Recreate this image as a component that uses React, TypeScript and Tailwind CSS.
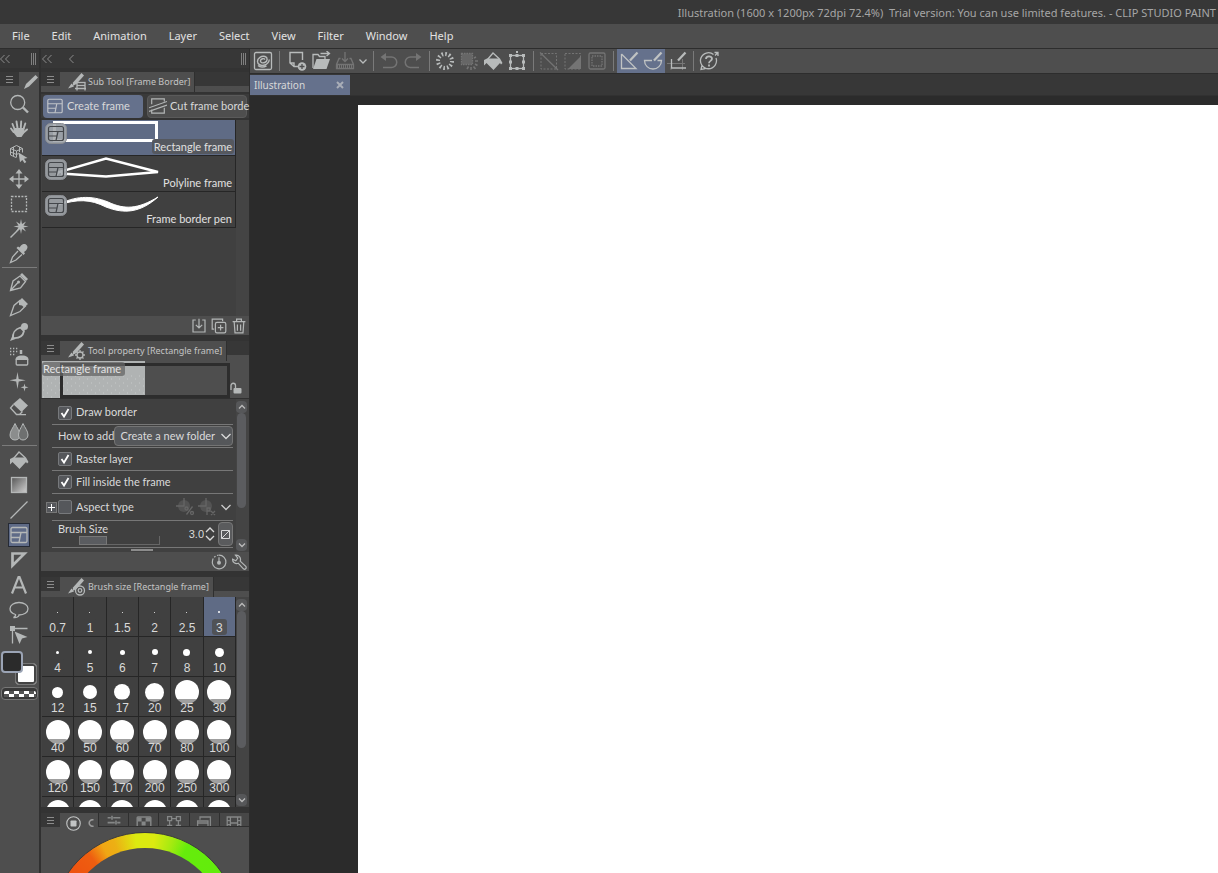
import type { ReactNode } from 'react';

const BODY = "font-['Lato','Liberation_Sans',sans-serif]";
const NUMERIC = "font-['Liberation_Sans','Roboto',sans-serif]";

type IconProps = { children: ReactNode; className?: string; box?: string };

function Icon({ children, className = 'w-5 h-5', box = '0 0 20 20' }: IconProps) {
  return (
    <svg
      viewBox={box}
      className={`shrink-0 ${className}`}
      fill="none"
      stroke="currentColor"
      strokeWidth="1.3"
      aria-hidden="true"
    >
      {children}
    </svg>
  );
}

const solid = { fill: 'currentColor', stroke: 'none' };

const frameGlyph = (
  <>
    <rect x="2" y="2.500" width="16" height="15" rx="1.500" />
    <path d="M2 7.500h16M2 12.500h8.500M12 7.500L10 17.500" />
  </>
);

const bucketGlyph = (
  <>
    <path d="M4.500 8.500L10 2l6.500 6" />
    <path d="M4 7.500h13l2.500 4.500-1.500 1.500-1-1.500-6.500 7L3.500 12 1 14.500V9z" {...solid} />
  </>
);

const toolGroups: { name: string; icon: ReactNode }[][] = [
  [
    { name: 'Zoom', icon: <><circle cx="8.700" cy="8.500" r="7" /><path d="M14 13.500l5 5" strokeWidth="2.400" /></> },
    {
      name: 'Hand',
      icon: (
        <>
          <path d="M5.500 10L3.500 5M8.500 9L7.500 2.500M11.800 9l.4-6.500M14.500 10l1.800-5.500M4.500 13L2 9.500" strokeWidth="1.900" strokeLinecap="round" />
          <path d="M5 9h10.500l-.6 5.500-2.400 3.500H8L4 13z" {...solid} />
          <path d="M14.500 13.500l3.500-3" strokeWidth="2" strokeLinecap="round" />
        </>
      ),
    },
    {
      name: 'Operation',
      icon: (
        <>
          <path d="M7 13.500L1.500 11V4.500L7.500 1.500l6 3v4M1.500 4.500l6 2.500 6-2.500M7.500 7v6.500M4.500 3v9M10.500 3v5M1.500 8l6 2.500 2-1" strokeWidth="1" />
          <path d="M9.500 8.500l9 5.500-3.500.8 2.300 3.200-1.700 1.200-2.300-3.300-2.300 2.400z" {...solid} />
        </>
      ),
    },
    {
      name: 'Move layer',
      icon: (
        <>
          <path d="M10 2v16M2 10h16" />
          <path d="M10 0l3.500 4.500h-7zM10 20l3.500-4.500h-7zM0 10l4.500-3.500v7zM20 10l-4.500-3.500v7z" {...solid} />
        </>
      ),
    },
    { name: 'Selection area', icon: <rect x="2.500" y="2.500" width="15" height="15" strokeDasharray="2 1.300" /> },
    {
      name: 'Auto select',
      icon: (
        <>
          <path d="M1.500 18.500L11 9" strokeWidth="1.500" />
          <path d="M12 0l1 5 4-2.500-2.500 4L19.500 7.500l-5 1 2.500 4-4-2.500-1 5-1-5-4 2.500 2.500-4-5-1 5-1L7 2.500 11 5z" {...solid} />
        </>
      ),
    },
    {
      name: 'Eyedropper',
      icon: (
        <>
          <path d="M12 1.500c2-2 4-2 5.500-.5s1.300 3.500-.5 5.500l-2 1.500 1 1.500-1.500 1.500-7-7L9 2.500l1.500 1z" {...solid} />
          <path d="M9 7l-5.500 6-2 5.500L7 16l6-5.500" />
        </>
      ),
    },
  ],
  [
    {
      name: 'Pen',
      icon: (
        <>
          <path d="M1.500 18.500L4 9l7-5 5.500 5.500-5 6.500zM1.500 18.500L9 10.500" />
          <circle cx="9.500" cy="10" r="1.500" {...solid} />
          <path d="M11 3L13 1l6 6-2 2z" {...solid} />
        </>
      ),
    },
    {
      name: 'Pencil',
      icon: (
        <>
          <path d="M1.500 18.500L5 8.500l6-5 5.500 5.500-5.500 5.500z" />
          <path d="M10 4L13 1l6 6-4 3.500-2-2-3-.5z" {...solid} />
        </>
      ),
    },
    {
      name: 'Brush',
      icon: (
        <>
          <path d="M4 16c-.5-4.500 2-9 7.500-10.500l3.500 3.500c-1 5-5 7.500-11 7z" strokeWidth="1.800" />
          <circle cx="15.500" cy="4.500" r="3.500" {...solid} />
          <path d="M1 19l2.500-5.500 3 3.500z" {...solid} />
        </>
      ),
    },
    {
      name: 'Airbrush',
      icon: (
        <>
          <path d="M1 1.500h8M1 4.500h9M1 7.500h6" strokeWidth="1.500" strokeDasharray="1.300 1.700" />
          <path d="M12 3v4" strokeWidth="2.500" />
          <path d="M6.500 13c0-3 2-4.500 6.500-4.500s6.500 1.500 6.500 4.500z" {...solid} />
          <rect x="7.200" y="12" width="11.500" height="6" rx="1" />
        </>
      ),
    },
    {
      name: 'Decoration',
      icon: (
        <>
          <path d="M8.500 0l1.200 7 7 1.300-7 1.200-1.200 7.500-1.300-7.500L.5 8.300 7.200 7z" {...solid} />
          <path d="M15.500 11.500l.8 3 3.200.8-3.200.9-.8 3.300-.8-3.300-3.200-.9 3.200-.8z" {...solid} />
        </>
      ),
    },
    {
      name: 'Eraser',
      icon: (
        <>
          <path d="M11 1l8 7.500-6.500 6.500L4 7z" {...solid} />
          <path d="M4.500 7.500L1.500 11l6 6.500h3l3-3M8 17.700h9" />
        </>
      ),
    },
    {
      name: 'Blend',
      icon: (
        <>
          <path d="M6 1.500C4 6 1 9 1 13c0 3 2 5 5 5s5-2 5-5c0-4-3-7-5-11.500z" fill="#8b8d8d" strokeWidth="1" />
          <path d="M14 1.500c-2 4.500-4.500 7.500-4.500 11.500 0 3 2 5 4.500 5s5-2 5-5c0-4-3-7-5-11.500z" fill="#6e7070" strokeWidth="1" />
        </>
      ),
    },
  ],
  [
    { name: 'Fill', icon: bucketGlyph },
    {
      name: 'Gradient',
      icon: (
        <>
          <defs>
            <linearGradient id="grad" x1="0" y1="0" x2="1" y2="1">
              <stop offset="0" stopColor="#555" />
              <stop offset="1" stopColor="#d0d0d0" />
            </linearGradient>
          </defs>
          <rect x="2.500" y="2.500" width="15" height="15" fill="url(#grad)" />
        </>
      ),
    },
    { name: 'Figure', icon: <path d="M1.500 18.500l17-17" /> },
    { name: 'Frame border', icon: frameGlyph },
    { name: 'Ruler', icon: <path d="M3.500 3.500h12L3.500 15.500z" strokeWidth="2.700" /> },
    { name: 'Text', icon: <path d="M3 18.500L9.500 2h1L17 18.500M5 12.500h10" strokeWidth="2.200" /> },
    { name: 'Balloon', icon: <path d="M6.500 14.500C3 13.500 1 11.500 1 8.800 1 5 5 2.500 10 2.500s9 2.500 9 6.300-4 6.200-9 6.200c0 1.500-2.500 3-5.500 2.500 1.500-.5 2.200-1.700 2-3z" /> },
    {
      name: 'Correct line',
      icon: (
        <>
          <path d="M3.500 18.500V3.500h15" />
          <rect x="1" y="1" width="5" height="5" {...solid} />
          <path d="M5.500 6.500l13 5.500-5.500 1.500-2.500 5.500z" {...solid} />
        </>
      ),
    },
  ],
];

const menus = ['File', 'Edit', 'Animation', 'Layer', 'Select', 'View', 'Filter', 'Window', 'Help'];

const brushSizes: [string, string][] = [
  ['0.7', 'size-px'], ['1', 'size-px'], ['1.5', 'size-px'], ['2', 'size-px'], ['2.5', 'size-px'], ['3', 'size-0.5'],
  ['4', 'size-[3px]'], ['5', 'size-1'], ['6', 'size-[5px]'], ['7', 'size-1.5'], ['8', 'size-[7px]'], ['10', 'size-[9px]'],
  ['12', 'size-[11px]'], ['15', 'size-3.5'], ['17', 'size-4'], ['20', 'size-[19px]'], ['25', 'size-6'], ['30', 'size-6'],
  ['40', 'size-6'], ['50', 'size-6'], ['60', 'size-6'], ['70', 'size-6'], ['80', 'size-6'], ['100', 'size-6'],
  ['120', 'size-6'], ['150', 'size-6'], ['170', 'size-6'], ['200', 'size-6'], ['250', 'size-6'], ['300', 'size-6'],
];

function MenuButton({ label }: { label: string }) {
  return (
    <button aria-label={label} className="flex h-[14px] w-[19px] shrink-0 items-center justify-center bg-[#373737] text-[#8c8c8c]">
      <Icon className="h-[7px] w-[7px]" box="0 0 7 7">
        <path d="M0 .5h7M0 3.500h7M0 6.500h7" strokeWidth="1" />
      </Icon>
    </button>
  );
}

function ToolPen({ badge }: { badge: ReactNode }) {
  return (
    <Icon className="w-[18px] h-[18px] text-[#b4b7b7]" box="0 0 18 18">
      <path d="M13.500 0L16 2.500 8.500 11l-4 2L5 9.500z" {...solid} />
      <path d="M0 15.500l3.500-5 2.500 3z" {...solid} />
      {badge}
    </Icon>
  );
}

function PanelHeader({ title, badge }: { title: string; badge: ReactNode }) {
  return (
    <div className="flex h-5 shrink-0 bg-gradient-to-b from-[#373737] from-70% to-[#4e4e4e] to-70%">
      <MenuButton label={`${title} menu`} />
      <h2 className="flex h-5 items-center gap-0.5 border-r border-[#2f2f2f] bg-[#4e4e4e] pl-2 pr-1 font-['Noto_Sans','Open_Sans',sans-serif] text-[9px] text-[#c4c4c4]">
        <ToolPen badge={badge} />
        {title}
      </h2>
    </div>
  );
}

function Scrollbar({ thumb }: { thumb: string }) {
  return (
    <div className="flex w-[13px] shrink-0 flex-col items-center bg-[#444] pb-px pr-0.5 pt-0.5 text-[#bbb]">
      <button aria-label="Scroll up" className="flex h-3 w-[11px] items-center justify-center rounded-sm bg-[#565759]">
        <Icon className="size-2" box="0 0 8 8"><path d="M1 5.500l3-3 3 3" /></Icon>
      </button>
      <div className={`w-[9px] rounded-full bg-[#5b5c5f] ${thumb}`} />
      <button aria-label="Scroll down" className="mt-auto flex h-3 w-[11px] items-center justify-center rounded-sm bg-[#565759]">
        <Icon className="size-2" box="0 0 8 8"><path d="M1 2.500l3 3 3-3" /></Icon>
      </button>
    </div>
  );
}

function Check({ label, checked = false }: { label: string; checked?: boolean }) {
  return (
    <label className="flex items-center gap-1">
      <span className="relative size-3.5">
        <input type="checkbox" defaultChecked={checked} className="peer block size-3.5 appearance-none rounded-[2px] border border-[#77797c] bg-[#55575b]" />
        <span className="pointer-events-none absolute inset-0 hidden text-white peer-checked:block">
          <Icon className="size-3.5" box="0 0 14 14"><path d="M3.500 7l2.500 3.500L10.500 3" strokeWidth="1.800" /></Icon>
        </span>
      </span>
      {label}
    </label>
  );
}

function DoubleChevron() {
  return (
    <Icon className="h-2 w-2.5 text-[#8c8c8c]" box="0 0 10 8"><path d="M4.500 0l-4 4 4 4M9.500 0l-4 4 4 4" strokeWidth="1" /></Icon>
  );
}

function Grip() {
  return <Icon className="h-3 w-1.5 text-[#808080]" box="0 0 6 12"><path d="M.5 0v12M2.500 0v12M4.500 0v12" strokeWidth="1" /></Icon>;
}

function ToolColumn() {
  return (
    <aside className="flex w-[41px] shrink-0 flex-col border-r-2 border-[#303030] bg-[#4e4e4e]">
      <div className="flex h-[23px] items-center justify-between border-b-4 border-[#333] bg-[#373737] pr-0.5">
        <DoubleChevron />
        <Grip />
      </div>
      <div className="flex h-5 shrink-0 bg-gradient-to-b from-[#373737] from-70% to-[#4e4e4e] to-70%">
        <MenuButton label="Tool menu" />
        <div className="flex flex-1 items-center justify-end bg-[#4e4e4e] text-[#b4b7b7]">
          <Icon className="h-4 w-4" box="0 0 16 16"><path d="M1 15l2-5L12.500 1 15 3.500l-9 9z" {...solid} /></Icon>
        </div>
      </div>
      {toolGroups.map((group, g) => (
        <div key={g}>
          {g > 0 && <div className="mx-0.5 mb-0.5 h-px bg-[#7b7b7b]" />}
          {group.map((tool) => (
            <button
              key={tool.name}
              aria-label={tool.name}
              className="flex h-[25px] w-[38px] items-center justify-center pb-px text-[#b4b7b7]"
            >
              <span className={tool.name === 'Frame border' ? 'flex h-6 w-[22px] items-center justify-center border border-[#252a35] bg-[#5f6b87]' : 'flex'}>
                <Icon>{tool.icon}</Icon>
              </span>
            </button>
          ))}
        </div>
      ))}
      {/* Main / sub / transparent colour */}
      <div className="relative mt-0.5 h-[35px]">
        <button aria-label="Sub color" className="absolute left-[15px] top-[13px] size-[22px] rounded border border-[#777] bg-white ring-2 ring-inset ring-[#444]" />
        <button aria-label="Main color" className="absolute left-px top-px size-[22px] rounded border-2 border-[#9ba4b5] bg-[#2b2b2b]" />
      </div>
      <button aria-label="Transparent color" className="mx-px mt-0.5 flex h-[13px] items-center justify-center rounded border border-[#777] bg-[#393939]">
        <Icon className="h-1.5 w-8" box="0 0 32 6">
          <rect width="32" height="6" rx="2" fill="#fff" stroke="none" />
          <path d="M5 1.500h26" stroke="#555" strokeWidth="3" strokeDasharray="5 5" />
          <path d="M0 4.500h32" stroke="#555" strokeWidth="3" strokeDasharray="5 5" />
        </Icon>
      </button>
    </aside>
  );
}

const strokes: { name: string; art: ReactNode }[] = [
  { name: 'Rectangle frame', art: <rect x="12.500" y="2.500" width="102" height="18" strokeWidth="3" /> },
  { name: 'Polyline frame', art: <path d="M14 19l3-3 47-13.500 52 13.500-52 4.500-45-3" strokeWidth="2.500" /> },
  { name: 'Frame border pen', art: <path d="M16 13c16-9 33-10 50-3 17 8 30 7 50-5-18 16-34 17-52 10C48 7 36 7 16 13z" fill="#fff" strokeWidth="1" /> },
];

function SubToolPanel() {
  return (
    <section>
      <PanelHeader title="Sub Tool [Frame Border]" badge={<><rect x="9" y="9.500" width="8" height="3" /><path d="M9 13v4.500M17 13v4.500M7 15.500h11" /></>} />
      <div className={`flex h-7 items-center gap-1 border-y-2 border-[#333] bg-[#3a3a3a] px-0.5 text-[11px] text-[#d8d8d8] ${BODY}`}>
        <button className="flex h-[23px] w-[100px] items-center gap-[3px] rounded-sm bg-[#65718c] pl-[3px] whitespace-nowrap">
          <Icon className="size-[18px] text-[#c0c3c8]">{frameGlyph}</Icon>
          Create frame
        </button>
        <button title="Cut frame border" className="flex h-[23px] w-[100px] items-center gap-[3px] rounded-sm border border-[#5a5a5a] bg-[#4e4e4e] pl-px whitespace-nowrap">
          <Icon className="size-[18px] text-[#b4b7b7]"><path d="M3 8V2h14v3M3 14v4h14v-6M0 12l20-7M0 16l20-7" /></Icon>
          Cut frame borde
        </button>
      </div>
      <div className="flex h-[196px] bg-[#444] pl-px">
        <ul className="flex-1 bg-[#404040]">
          {strokes.map((s) => (
            <li key={s.name} className={`border-b border-r border-[#262626] ${s.name === 'Rectangle frame' ? 'bg-[#5f6b85]' : ''}`}>
              <button className="relative block h-[35px] w-full">
                <svg width="193" height="35" viewBox="0 0 193 35" fill="none" stroke="#fff" aria-hidden="true">
                  {s.art}
                  <rect x="3.500" y="3.500" width="21" height="20" rx="5" fill="#a2a6ab" fillOpacity=".88" stroke="#8a8d92" />
                  <g stroke="#44474b" strokeWidth="1.200">
                    <rect x="6.500" y="6.500" width="15" height="14" rx="2" />
                    <path d="M6.500 11.500h15M6.500 16h8M16 11.500l-2 9" />
                  </g>
                </svg>
                <span className={`absolute bottom-px right-px rounded-[3px] px-0.5 pt-px leading-[14px] text-[11px] text-[#e0e0e0] ${BODY} ${s.name === 'Rectangle frame' ? 'bg-[#55585f]' : ''}`}>
                  {s.name}
                </span>
              </button>
            </li>
          ))}
        </ul>
        <div className="w-[13px]" />
      </div>
      <div className="flex h-[19px] items-center justify-end gap-1 bg-[#4e4e4e] pr-0.5 text-[#b4b7b7]">
        <button aria-label="Import sub tool"><Icon className="size-4"><path d="M6 2.500H2.500v15h15v-15H14M10 1v11M6 8.500l4 4 4-4" strokeWidth="1.500" /></Icon></button>
        <button aria-label="Duplicate sub tool"><Icon className="size-4"><path d="M4 14H1.500V1.500h13V4M12 8.500v7M8.500 12h7" strokeWidth="1.500" /><rect x="5.500" y="5.500" width="13" height="13" rx="2" strokeWidth="1.500" /></Icon></button>
        <button aria-label="Delete sub tool"><Icon className="size-4"><path d="M2 4.500h16M7 4V1.500h6V4M4 5l1 13.500h10L16 5M8 8v8M12 8v8" strokeWidth="1.500" /></Icon></button>
      </div>
    </section>
  );
}

function ToolPropertyPanel() {
  return (
    <section>
      <PanelHeader title="Tool property [Rectangle frame]" badge={<><circle cx="12" cy="13" r="3" /><path d="M12 8v2M12 16v2M7 13h2M15 13h2M8.500 9.500l1.300 1.300M14.200 15.200l1.300 1.300M15.500 9.500l-1.300 1.300M8.500 16.500l1.300-1.300" /></>} />
      <div className="flex h-[38px] border-b border-[#303030] bg-[#4e4e4e] pl-px">
        <div className="relative h-[37px] w-[188px]">
          <svg width="188" height="37" viewBox="0 0 188 37" aria-hidden="true">
            <defs>
              <pattern id="speckle" width="8" height="7" patternUnits="userSpaceOnUse">
                <path d="M1 1h1M5 4h1" stroke="#c6c9c9" strokeWidth="1" />
              </pattern>
            </defs>
            <rect width="103" height="37" fill="#b0b3b3" />
            <rect y="14" width="103" height="23" fill="url(#speckle)" />
            <rect x="19.500" y="3.500" width="167" height="32" fill="none" stroke="#2d2d2d" strokeWidth="3" />
          </svg>
          <span className={`absolute left-0 top-px rounded-[3px] bg-[#666]/75 pl-px pr-1 text-[11px] leading-[14px] text-[#e4e4e4] ${BODY}`}>Rectangle frame</span>
        </div>
        <button aria-label="Lock" className="mt-auto mb-1 text-[#b4b7b7]">
          <Icon className="h-3 w-3" box="0 0 12 12"><path d="M1 8V3.500a2.200 2.200 0 0 1 4.500 0V6" /><rect x="3.500" y="6" width="8" height="5.500" rx="1" {...solid} /></Icon>
        </button>
      </div>
      <div className="flex h-[153px] bg-[#404040] pl-px">
        <div className={`flex min-w-0 flex-1 flex-col overflow-hidden pr-[3px] text-[11px] text-[#dadada] ${BODY}`}>
          <div className="ml-2.5 flex h-[26px] shrink-0 items-center border-b border-[#777] pl-1.5 pt-0.5"><Check label="Draw border" checked /></div>
          <div className="ml-2.5 flex h-[23px] shrink-0 items-center justify-between border-b border-[#777] pl-1.5">
            <label htmlFor="how-to-add" className="whitespace-nowrap">How to add</label>
            <span className="relative">
              <select id="how-to-add" className="block h-5 w-[119px] appearance-none rounded-sm border border-[#747474] bg-[#55575a] pl-[5px] text-[11px]">
                <option>Create a new folder</option>
                <option>Do not change folder</option>
              </select>
              <span className="pointer-events-none absolute right-0.5 top-[5px]">
                <Icon className="size-2.5" box="0 0 10 10"><path d="M.5 3L5 7.500 9.500 3" /></Icon>
              </span>
            </span>
          </div>
          <div className="ml-2.5 flex h-[23px] shrink-0 items-center border-b border-[#777] pl-1.5"><Check label="Raster layer" checked /></div>
          <div className="ml-2.5 flex h-[23px] shrink-0 items-center border-b border-[#777] pl-1.5"><Check label="Fill inside the frame" checked /></div>
          <div className="flex h-[26px] shrink-0 items-center pl-1">
            <button aria-label="Expand aspect type" className="flex size-[11px] shrink-0 items-center justify-center border border-[#777] bg-[#55575b] text-white">
              <Icon className="size-[9px]" box="0 0 9 9"><path d="M1 4.500h7M4.500 1v7" strokeWidth="1" /></Icon>
            </button>
            <div className="ml-px flex flex-1 items-center justify-between">
              <Check label="Aspect type" />
              <div className="flex items-center gap-0.5 text-[#666]">
                <Icon><circle cx="9" cy="9" r="6" fill="#535353" stroke="none" /><path d="M9 1v8H1" /><path d="M17.500 9.500l-6 8" /><circle cx="11.500" cy="11.500" r="1.500" /><circle cx="17" cy="16" r="1.500" /></Icon>
                <Icon><circle cx="9" cy="9" r="6" fill="#535353" stroke="none" /><path d="M9 1v8H1M10 18v-7h3v3h-3M14 14l4 4M18 14l-4 4" /></Icon>
                <button aria-label="Aspect options" className="px-0.5 text-[#ccc]">
                  <Icon className="size-2.5" box="0 0 10 10"><path d="M.5 3L5 7.500 9.500 3" /></Icon>
                </button>
              </div>
            </div>
          </div>
          <div className="ml-2.5 flex h-[28px] shrink-0 items-center border-y border-[#777] pl-1.5">
            <div className="h-full flex-1">
              <label htmlFor="brush-size" className="block h-[15px] leading-4">Brush Size</label>
              <div className="relative ml-[21px] h-[9px] w-[81px] border-b border-r border-[#666]">
                <div className="h-[9px] w-7 border border-[#777] bg-[#5a5c60]" />
                <input id="brush-size" type="range" defaultValue={35} className="absolute inset-0 w-full opacity-0" />
              </div>
            </div>
            <input aria-label="Brush Size value" defaultValue="3.0" className={`w-6 bg-transparent text-right text-[11px] ${NUMERIC}`} />
            <button aria-label="Step value" className="ml-px mr-[3px]">
              <Icon className="h-3.5 w-2.5" box="0 0 10 14"><path d="M1 5l4-4 4 4M1 9l4 4 4-4" /></Icon>
            </button>
            <button aria-label="Brush dynamics" className="flex h-6 w-[15px] items-center justify-center rounded-sm border border-[#777] bg-[#5a5b5d]">
              <Icon className="size-[9px]" box="0 0 9 9"><path d="M.5.5h8v8h-8zM.5 8.500l8-8" strokeWidth="1" /></Icon>
            </button>
          </div>
          <div className="mt-px ml-[89px] h-0.5 w-[22px] shrink-0 bg-[#8c8c8c]" />
        </div>
        <Scrollbar thumb="h-[95px]" />
      </div>
      <div className="flex h-[19px] items-center justify-end gap-1 bg-[#4e4e4e] pr-0.5 text-[#b4b7b7]">
        <button aria-label="Reset settings"><Icon className="size-4"><path d="M10 1.500a8.500 8.500 0 1 1-8 6" strokeWidth="1.500" /><path d="M2 7.500a8.500 8.500 0 0 1 8-6" strokeDasharray="2 2" strokeWidth="1.500" /><path d="M10 4v7" strokeWidth="1.500" /><circle cx="10" cy="11" r="2.500" {...solid} /></Icon></button>
        <button aria-label="Sub tool detail"><Icon className="size-4"><path d="M2 6.500a5 5 0 0 0 7 5l6.500 7c2 1.500 4.500-.5 3-3l-7-6.500c1.500-4-2-8.500-6-7.500l3 3.500-2.500 3.500z" strokeWidth="1.500" /></Icon></button>
      </div>
    </section>
  );
}

function BrushSizePanel() {
  return (
    <section>
      <PanelHeader title="Brush size [Rectangle frame]" badge={<><circle cx="12" cy="12.500" r="4.500" /><circle cx="12" cy="12.500" r="1.800" /></>} />
      <div className="flex h-[210px] overflow-hidden bg-[#444] pl-px">
        <div className={`grid flex-1 auto-rows-[40px] grid-cols-6 text-xs text-[#dadada] ${NUMERIC}`}>
          {brushSizes.map(([value, dot]) => (
            <button key={value} className={`relative border-b border-r border-[#262626] ${value === '3' ? 'bg-[#5f6b85]' : 'bg-[#404040]'}`}>
              <span className="absolute inset-x-0 top-[3px] flex h-6 items-center justify-center">
                <span className={`rounded-full bg-white ${dot}`} />
              </span>
              <span className={`absolute inset-x-0 top-[22px] mx-auto w-fit rounded-[3px] px-1 pt-0.5 leading-[14px] ${value === '3' ? 'bg-[#505256]' : 'bg-[#404040]/50'}`}>{value}</span>
            </button>
          ))}
          {['a', 'b', 'c', 'd', 'e', 'f'].map((k) => (
            <span key={k} className="flex justify-center border-r border-[#262626] bg-[#404040] pt-[3px]">
              <span className="size-6 rounded-full bg-white" />
            </span>
          ))}
        </div>
        <Scrollbar thumb="h-[137px]" />
      </div>
    </section>
  );
}

const colorTabs: { name: string; icon: ReactNode }[] = [
  { name: 'Color slider', icon: <path d="M2 3.500h4M9 3.500h9M2 9.500h9M14 9.500h4M2 15.500h5M10 15.500h8M7.500 1v5M12.500 7v5" strokeWidth="2" /> },
  { name: 'Color set', icon: <><rect x="1.500" y="2.500" width="17" height="15" rx="1" strokeWidth="1.800" /><path d="M2 3h5v5H2zM12 3h6v5h-6zM7 8h5v5H7z" {...solid} /></> },
  { name: 'Intermediate color', icon: <path d="M2 2h5v5H2zM13 2h5v5h-5zM2 13h5v5H2zM13 13h5v5h-5zM7 4.500h6M4.500 7v6M15.500 7v6" strokeWidth="1.600" /> },
  { name: 'Color history', icon: <path d="M5 6V2.500h13V14M2 7.500h13V18H2zM2 10h13" strokeWidth="1.600" /> },
  { name: 'Color mixing', icon: <path d="M1.500 2.500h17v15h-17zM5.500 2v16M14.500 2v16M5.500 10h9M2 7h3M2 12h3M15 7h3M15 12h3" strokeWidth="1.600" /> },
];

function ColorWheelPanel() {
  return (
    <section className="flex min-h-0 flex-1 flex-col">
      <div className="flex h-3.5 shrink-0 bg-[#373737] text-[#858787]">
        <MenuButton label="Color wheel menu" />
        <div className="relative z-10 flex h-5 w-[38px] items-center gap-[7px] bg-[#4e4e4e] pl-1.5 text-[#c2c4c4]">
          <button aria-label="Color wheel">
            <Icon className="size-[15px]"><circle cx="10" cy="10" r="9" strokeWidth="1.500" /><rect x="6" y="6" width="8" height="8" rx="1" {...solid} /></Icon>
          </button>
          <Icon className="h-2 w-1.5 text-[#9a9a9a]" box="0 0 6 8"><path d="M5.500 1A3.200 3.200 0 1 0 5.500 7" strokeWidth="1.600" /></Icon>
        </div>
        {colorTabs.map((t) => (
          <button key={t.name} aria-label={t.name} className="flex flex-1 justify-center overflow-hidden border-b border-l border-[#2f2f2f] bg-[#474747] pt-0.5">
            <Icon className="size-4">{t.icon}</Icon>
          </button>
        ))}
      </div>
      <div className="min-h-0 flex-1 overflow-hidden bg-[#4e4e4e] pt-[5px]">
        <div className="mx-auto size-[188px] rounded-full border border-[#3c3c3c] bg-[conic-gradient(from_-60deg,#ee4e10_0deg,#ee5e10_22deg,#f0a614_32deg,#ecb014_40deg,#dcea10_54deg,#dcea10_66deg,#a4ea10_78deg,#66ec0c_88deg,#60ec0c_130deg,#54ec0c_300deg)] p-[15px]">
          <div className="size-full rounded-full bg-[#4e4e4e]" />
        </div>
      </div>
    </section>
  );
}

function CommandButton({ name, children, state = 'on' }: { name: string; children: ReactNode; state?: 'on' | 'off' | 'active' }) {
  const tone = state === 'off' ? 'text-[#747474]' : state === 'active' ? 'bg-[#65718c] text-[#c0c3c3]' : 'text-[#b8bbbb]';
  return (
    <button aria-label={name} className={`flex h-6 w-6 shrink-0 items-center justify-center ${tone}`}>
      <Icon>{children}</Icon>
    </button>
  );
}

function Divider() {
  return <div className="mx-[3px] h-5 w-0.5 shrink-0 border-r border-[#7a7a7a]" />;
}

function CommandBar() {
  return (
    <div className="flex h-[25px] items-center border-b border-[#2d2d2d] bg-[#4e4e4e] pl-px">
      <CommandButton name="Clip Studio">
        <rect x="1.500" y="1.500" width="17" height="17" rx="1.500" />
        <path d="M12 8.500c-1-1.500-4-.8-4.500 1-.5 2 2 3 4.300 2 3-1.300 3.200-5 .2-6C8.500 4.500 4.500 7 4.500 10.500c0 3 3.500 4.500 7 3.500 2.500-.8 4.500-3 4.800-5.500M5 14.500c2 2 6 2 8.500.3" strokeWidth="1.400" />
      </CommandButton>
      <Divider />
      <div className="w-0.5" />
      <CommandButton name="New"><path d="M12 15.500H7L3 12V1.500h12.500V9M3 12h4v3.500" strokeWidth="1.400" /><circle cx="15" cy="15.500" r="4.300" {...solid} /><path d="M15 13v5M12.500 15.500h5" stroke="#4e4e4e" /></CommandButton>
      <CommandButton name="Open"><path d="M2 17V3.500h5l1.500 2H14V8M9.500 2.500H18M15.500 0L18.500 2.500 15.500 5" /><path d="M5.500 8H19l-3.500 10H2z" {...solid} /></CommandButton>
      <CommandButton name="Save" state="off"><path d="M5.500 7.500H4l-2.500 6v4h17v-4l-2.500-6h-1.500M1.500 13.500h17M10 1v9M7 7.500l3 3 3-3" /><path d="M2 15.500h16" strokeWidth="3" strokeDasharray="1 1" /></CommandButton>
      <button aria-label="Save options" className="flex w-3 shrink-0 justify-center text-[#b8bbbb]">
        <Icon className="size-2" box="0 0 8 8"><path d="M.5 2.500L4 6l3.500-3.500" /></Icon>
      </button>
      <Divider />
      <CommandButton name="Undo" state="off"><path d="M4 6h8.500a5 5 0 0 1 0 10.500H4" strokeWidth="1.500" /><path d="M7 2v8L1.500 6z" {...solid} /></CommandButton>
      <CommandButton name="Redo" state="off"><path d="M16 6H7.500a5 5 0 0 0 0 10.500H16" strokeWidth="1.500" /><path d="M13 2v8l5.500-4z" {...solid} /></CommandButton>
      <Divider />
      <CommandButton name="Clear"><circle cx="10" cy="10" r="7" strokeWidth="4" strokeDasharray="1.600 2.065" /></CommandButton>
      <CommandButton name="Clear outside selection" state="off">
        <rect x="2.500" y="2.500" width="11" height="11" fill="#666" strokeDasharray="1.500 1" />
        <path d="M17 6l-2 1M19 10h-3M18.500 14.500l-2.500-1.500M16.500 18l-2-2.500M12 19v-3M8 18l1.500-2.500" strokeWidth="1.600" />
      </CommandButton>
      <CommandButton name="Fill">{bucketGlyph}</CommandButton>
      <CommandButton name="Scale and rotate">
        <rect x="3.500" y="4.500" width="13" height="13" />
        <path d="M2 3h3v3H2zM15 3h3v3h-3zM2 16h3v3H2zM15 16h3v3h-3zM8.500 3h3v3h-3zM8.500 16h3v3h-3zM2 9.500h3v3H2zM15 9.500h3v3h-3zM9 0h2v2H9z" {...solid} />
      </CommandButton>
      <Divider />
      <CommandButton name="Deselect" state="off"><rect x="2" y="2.500" width="15.500" height="15.500" strokeDasharray="2 1.500" strokeWidth="1" /><path d="M1 1.500L19 19" /></CommandButton>
      <CommandButton name="Invert selection" state="off"><rect x="2" y="2.500" width="15.500" height="15.500" strokeDasharray="2 1.500" strokeWidth="1" /><path d="M18 5v13H5z" {...solid} /></CommandButton>
      <CommandButton name="Show selection border" state="off"><rect x="2" y="2" width="16" height="16" rx="1.500" /><rect x="5" y="5" width="10" height="10" strokeDasharray="1.500 1" /></CommandButton>
      <Divider />
      <CommandButton name="Snap to ruler" state="active"><path d="M2.500 3v14.500H17L2.500 3" /><path d="M11 9.500L18.500 1.500" strokeWidth="2.200" /></CommandButton>
      <CommandButton name="Snap to special ruler" state="active"><path d="M9 9.500H1.500c0 5 4 8.500 8.500 8.500s8.500-3.500 8.500-8.500h-4" /><path d="M11 9.500L18.500 1.500" strokeWidth="2.200" /></CommandButton>
      <CommandButton name="Snap to grid"><path d="M0 12.500h18M15.500 8v11M4 16.500V19" stroke="#777" strokeWidth="1" /><path d="M4.500 8v9H19" /><path d="M11 9.500L18.500 1.500" strokeWidth="2.200" /></CommandButton>
      <Divider />
      <CommandButton name="Help"><path d="M14.500 3.500A8 8 0 1 0 17 7M3 14l-1 4.500 4.500-.8M15.500 1.500h3.500V5M19 1.500l-3 3" /><path d="M7 8c0-3.500 6-3.500 6-.2 0 2-3 2.200-3 4.400M10 13.500v2" strokeWidth="1.800" /></CommandButton>
    </div>
  );
}

export default function App() {
  return (
    <div className="flex h-screen flex-col overflow-hidden bg-[#2b2b2b] font-['Noto_Sans','Open_Sans',sans-serif]">
      <header className="flex h-6 shrink-0 items-center justify-end bg-[#373737] pr-0.5 pt-0.5 text-[11px] whitespace-pre text-[#a6a6a6]">
        Illustration (1600 x 1200px 72dpi 72.4%)  Trial version: You can use limited features. - CLIP STUDIO PAINT
      </header>
      <nav className="flex h-[25px] shrink-0 items-center border-b border-[#2d2d2d] bg-[#4e4e4e] pl-px text-[11px] text-[#e2e2e2]">
        {menus.map((m) => (
          <button key={m} className="px-[11px]">{m}</button>
        ))}
      </nav>

      <div className="flex min-h-0 flex-1">
        <ToolColumn />

        {/* Docked palettes */}
        <aside className="flex w-[209px] shrink-0 flex-col border-r border-[#2d2d2d] bg-[#333]">
          <div className="flex h-[23px] shrink-0 items-center border-b-4 border-[#333] bg-[#373737] pl-px pr-0.5">
            <DoubleChevron />
            <Icon className="ml-4 h-2 w-1.5 text-[#8c8c8c]" box="0 0 6 8"><path d="M5.500 0l-4 4 4 4" strokeWidth="1" /></Icon>
            <span className="ml-auto"><Grip /></span>
          </div>
          <div className="flex min-h-0 flex-1 flex-col gap-1.5">
            <SubToolPanel />
            <ToolPropertyPanel />
            <BrushSizePanel />
            <ColorWheelPanel />
          </div>
        </aside>

        <main className="flex min-w-0 flex-1 flex-col">
          <CommandBar />
          <div className="flex h-[22px] shrink-0 items-start border-b border-[#313131] bg-[#373737] pt-px">
            <div className="flex h-5 w-[100px] items-center justify-between bg-[#65718c] pl-1 pr-1.5 text-[10px] text-[#d8d8d8]">
              Illustration
              <button aria-label="Close Illustration" className="text-[#a9aeb8]">
                <Icon className="size-2" box="0 0 8 8"><path d="M1 1l6 6M7 1L1 7" strokeWidth="2" /></Icon>
              </button>
            </div>
          </div>
          <div className="flex-1 pl-[108px] pt-[9px]">
            <div className="h-full bg-white" />
          </div>
        </main>
      </div>
    </div>
  );
}
